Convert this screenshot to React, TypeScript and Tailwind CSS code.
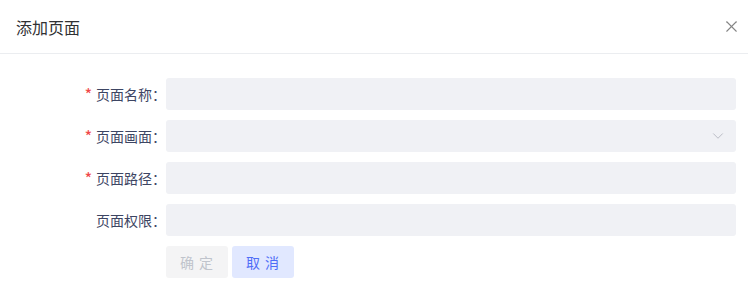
import { ChevronDown, X } from "lucide-react";

const fields = [
  { label: "页面名称", required: true, select: false },
  { label: "页面画面", required: true, select: true },
  { label: "页面路径", required: true, select: false },
  { label: "页面权限", required: false, select: false },
];

export default function App() {
  return (
    <div
      className="w-[748px] h-[303px] bg-white"
      style={{ fontFamily: '"Noto Sans CJK SC", "Noto Sans", sans-serif' }}
    >
      <div className="h-[54px] flex items-center justify-between pl-4 pr-[7px] border-b border-[#ebedf0]">
        <span className="text-[16px] text-[#303133]">添加页面</span>
        <X className="w-[19px] h-[19px] text-[#858585]" strokeWidth={1.4} />
      </div>
      <div className="pt-6 pr-3 flex flex-col gap-[10px]">
        {fields.map((f) => (
          <div key={f.label} className="flex items-center">
            <label className="w-[166px] text-right text-[14px] text-[#3d4563]">
              {f.required && (
                <span className="text-[#f04848] mr-[4px] text-[15px] font-medium">*</span>
              )}
              {f.label}：
            </label>
            <div className="flex-1 h-8 rounded-[3px] bg-[#f0f1f5] flex items-center justify-end pr-[9px]">
              {f.select && <ChevronDown className="w-[18px] h-[18px] text-[#b4b7c0]" strokeWidth={1.2} />}
            </div>
          </div>
        ))}
        <div className="flex gap-1 pl-[166px]">
          <button className="w-[62px] h-8 rounded-[3px] bg-[#f4f4f5] text-[14px] text-[#c0c4cc] tracking-[1px]">
            确 定
          </button>
          <button className="w-[62px] h-8 rounded-[3px] bg-[#e1e8ff] text-[14px] text-[#4f6ef7] tracking-[1px]">
            取 消
          </button>
        </div>
      </div>
    </div>
  );
}
